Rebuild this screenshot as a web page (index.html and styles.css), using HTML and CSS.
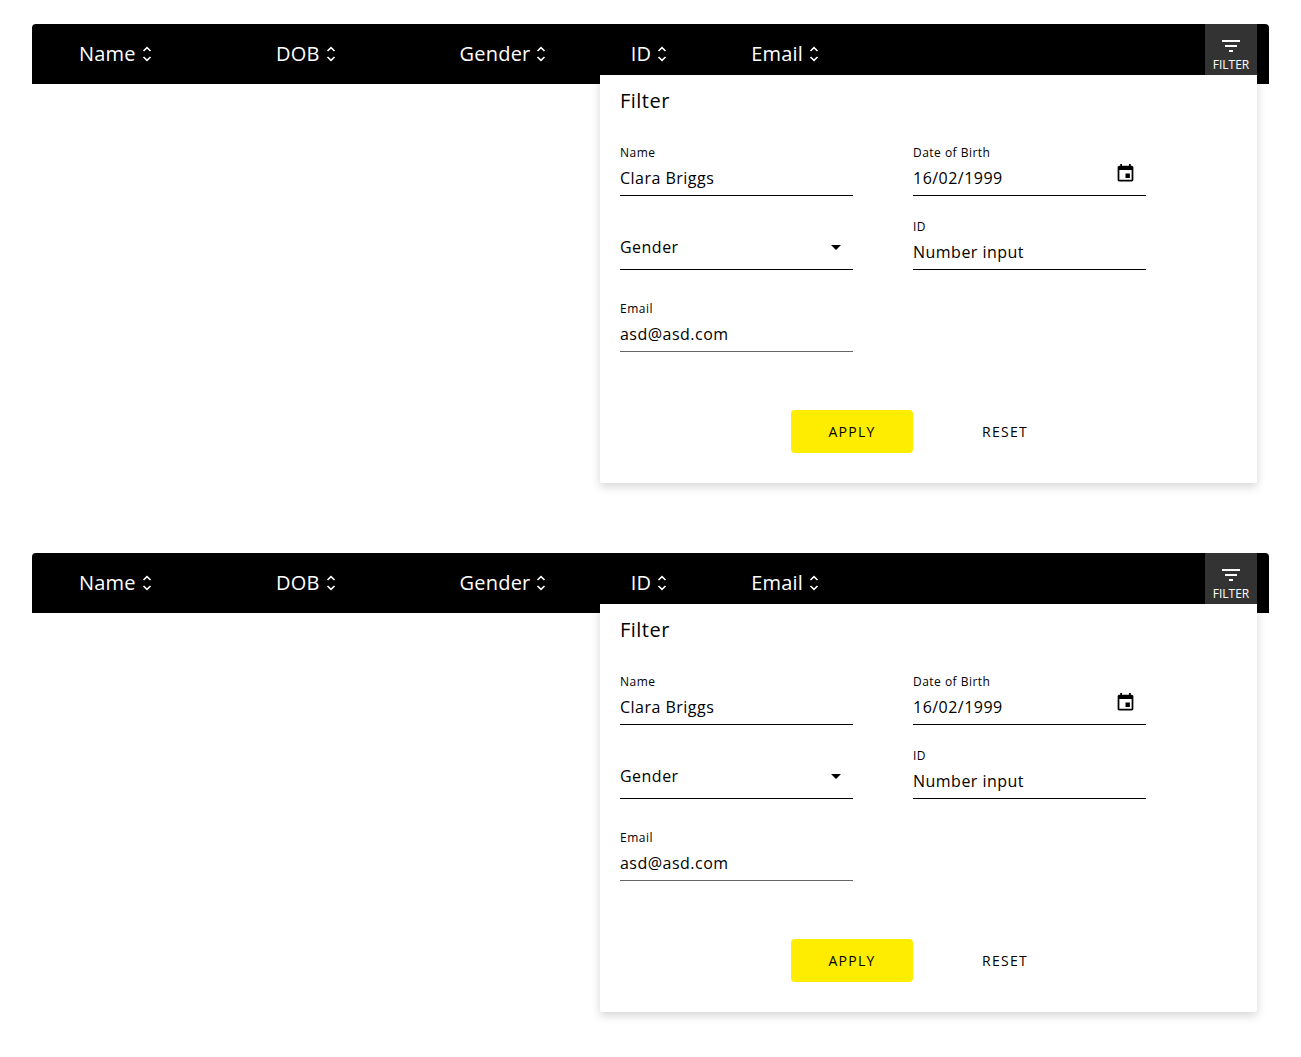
FILE: index.html
```
<!DOCTYPE html>
<html lang="en">
<head>
<meta charset="utf-8">
<meta name="viewport" content="width=device-width, initial-scale=1">
<title>Filter</title>
<link rel="stylesheet" href="styles.css">
</head>
<body>
<svg class="sprite" aria-hidden="true">
  <symbol id="sort" viewBox="0 0 10 16"><path d="M1.5 5 5 1.7 8.500 5M1.500 11 5 14.300 8.500 11" fill="none" stroke="currentColor" stroke-width="1.600"/></symbol>
  <symbol id="filter" viewBox="0 0 18 12"><path d="M0 0h18v2H0zM3 5h12v2H3zM7 10h4v2H7z" fill="currentColor"/></symbol>
  <symbol id="calendar" viewBox="0 0 24 24"><path d="M17 12h-5v5h5v-5zM16 1v2H8V1H6v2H5c-1.110 0-1.990.9-1.990 2L3 19c0 1.100.89 2 2 2h14c1.100 0 2-.9 2-2V5c0-1.100-.9-2-2-2h-1V1h-2zm3 18H5V8h14v11z" fill="currentColor"/></symbol>
  <symbol id="arrow" viewBox="0 0 10 5"><path d="M0 0h10L5 5z" fill="currentColor"/></symbol>
</svg>
<main class="page">
  <section class="list">
    <div class="bar">
      <table class="columns">
        <thead>
          <tr>
            <th class="col-name"><button class="sort" type="button">Name<svg><use href="#sort"/></svg></button></th>
            <th class="col-dob"><button class="sort" type="button">DOB<svg><use href="#sort"/></svg></button></th>
            <th class="col-gender"><button class="sort" type="button">Gender<svg><use href="#sort"/></svg></button></th>
            <th class="col-id"><button class="sort" type="button">ID<svg><use href="#sort"/></svg></button></th>
            <th><button class="sort" type="button">Email<svg><use href="#sort"/></svg></button></th>
          </tr>
        </thead>
      </table>
      <div class="filter">
        <button class="toggle" type="button"><svg><use href="#filter"/></svg>FILTER</button>
        <form class="panel">
          <h2 class="title">Filter</h2>
          <div class="fields">
            <div class="field">
              <label for="name-1">Name</label>
              <input id="name-1" type="text" value="Clara Briggs">
            </div>
            <div class="field">
              <label for="dob-1">Date of Birth</label>
              <input id="dob-1" type="text" value="16/02/1999">
              <button class="pick" type="button" aria-label="Choose date"><svg><use href="#calendar"/></svg></button>
            </div>
            <div class="field choice">
              <select id="gender-1" aria-label="Gender"><option>Gender</option></select>
              <svg class="arrow"><use href="#arrow"/></svg>
            </div>
            <div class="field">
              <label for="id-1">ID</label>
              <input id="id-1" type="text" value="Number input">
            </div>
            <div class="field muted">
              <label for="email-1">Email</label>
              <input id="email-1" type="email" value="asd@asd.com">
            </div>
          </div>
          <div class="actions">
            <button class="action primary" type="button">APPLY</button>
            <button class="action" type="reset">RESET</button>
          </div>
        </form>
      </div>
    </div>
  </section>
  <section class="list">
    <div class="bar">
      <table class="columns">
        <thead>
          <tr>
            <th class="col-name"><button class="sort" type="button">Name<svg><use href="#sort"/></svg></button></th>
            <th class="col-dob"><button class="sort" type="button">DOB<svg><use href="#sort"/></svg></button></th>
            <th class="col-gender"><button class="sort" type="button">Gender<svg><use href="#sort"/></svg></button></th>
            <th class="col-id"><button class="sort" type="button">ID<svg><use href="#sort"/></svg></button></th>
            <th><button class="sort" type="button">Email<svg><use href="#sort"/></svg></button></th>
          </tr>
        </thead>
      </table>
      <div class="filter">
        <button class="toggle" type="button"><svg><use href="#filter"/></svg>FILTER</button>
        <form class="panel">
          <h2 class="title">Filter</h2>
          <div class="fields">
            <div class="field">
              <label for="name-2">Name</label>
              <input id="name-2" type="text" value="Clara Briggs">
            </div>
            <div class="field">
              <label for="dob-2">Date of Birth</label>
              <input id="dob-2" type="text" value="16/02/1999">
              <button class="pick" type="button" aria-label="Choose date"><svg><use href="#calendar"/></svg></button>
            </div>
            <div class="field choice">
              <select id="gender-2" aria-label="Gender"><option>Gender</option></select>
              <svg class="arrow"><use href="#arrow"/></svg>
            </div>
            <div class="field">
              <label for="id-2">ID</label>
              <input id="id-2" type="text" value="Number input">
            </div>
            <div class="field muted">
              <label for="email-2">Email</label>
              <input id="email-2" type="email" value="asd@asd.com">
            </div>
          </div>
          <div class="actions">
            <button class="action primary" type="button">APPLY</button>
            <button class="action" type="reset">RESET</button>
          </div>
        </form>
      </div>
    </div>
  </section>
</main>
</body>
</html>
```
FILE: styles.css
```
* {
  box-sizing: border-box;
}

body {
  margin: 0;
  background: #fff;
  color: #000;
  font-family: "Open Sans", sans-serif;
}

button,
input,
select {
  margin: 0;
  padding: 0;
  border: 0;
  background: none;
  color: inherit;
  font: inherit;
  letter-spacing: inherit;
}

button {
  cursor: pointer;
}

.sprite {
  display: none;
}

.page {
  padding: 24px 32px 0;
}

/* Leaves room for the open panel below each bar. */
.list {
  padding-bottom: 469px;
}

.list:last-child {
  padding-bottom: 440px;
}

.bar {
  display: flex;
  align-items: flex-start;
  min-height: 60px;
  padding-right: 12px;
  border-radius: 4px 4px 0 0;
  background: #000;
  color: #fff;
}

.columns {
  flex: 1;
  table-layout: fixed;
  border-collapse: collapse;
  margin-left: 47px;
}

.columns th {
  height: 60px;
  padding: 0;
  font-weight: 400;
  text-align: left;
}

.col-name {
  width: 17.5%;
}

.col-dob {
  width: 16.3%;
}

.col-gender {
  width: 15.2%;
}

.col-id {
  width: 10.7%;
}

.sort {
  display: flex;
  align-items: center;
  gap: 6px;
  font-size: 20px;
  line-height: 28px;
  letter-spacing: 0.01em;
}

.sort svg {
  width: 10px;
  height: 16px;
}

.filter {
  position: relative;
  flex: none;
}

.toggle {
  display: flex;
  flex-direction: column;
  align-items: center;
  gap: 5px;
  width: 52px;
  height: 51px;
  padding-top: 16px;
  background: #333;
  font-size: 12px;
  line-height: 16px;
}

.toggle svg {
  flex: none;
  width: 18px;
  height: 12px;
}

.panel {
  position: absolute;
  top: 100%;
  right: 0;
  width: 657px;
  padding: 12px 20px 30px;
  border-radius: 0 0 2px 2px;
  background: #fff;
  box-shadow: 0 4px 10px rgba(0, 0, 0, 0.16);
  color: #000;
  letter-spacing: 0.03em;
}

.title {
  margin: 0 0 30px;
  font-size: 20px;
  font-weight: 400;
  line-height: 28px;
}

.fields {
  display: grid;
  grid-template-columns: 233px 233px;
  gap: 23px 60px;
}

.field {
  position: relative;
  display: flex;
  flex-direction: column;
}

.field label {
  font-size: 12px;
  line-height: 16px;
}

.field input,
.field select {
  width: 100%;
  height: 35px;
  border-bottom: 1px solid #000;
  border-radius: 0;
  outline: 0;
  font-size: 16px;
}

.field select {
  height: 45px;
  appearance: none;
}

.choice {
  justify-content: flex-end;
  margin-bottom: 8px;
  padding-top: 6px;
}

.muted input {
  border-color: #666;
}

.arrow {
  position: absolute;
  right: 12px;
  bottom: 20px;
  width: 10px;
  height: 5px;
  pointer-events: none;
}

.pick {
  position: absolute;
  right: 10px;
  top: 18px;
  display: flex;
}

.pick svg {
  width: 21px;
  height: 21px;
}

.actions {
  display: flex;
  justify-content: center;
  gap: 31px;
  margin-top: 58px;
}

.action {
  width: 122px;
  height: 43px;
  border-radius: 4px;
  font-size: 14px;
  letter-spacing: 0.09em;
}

.primary {
  background: #ffed00;
}
```
